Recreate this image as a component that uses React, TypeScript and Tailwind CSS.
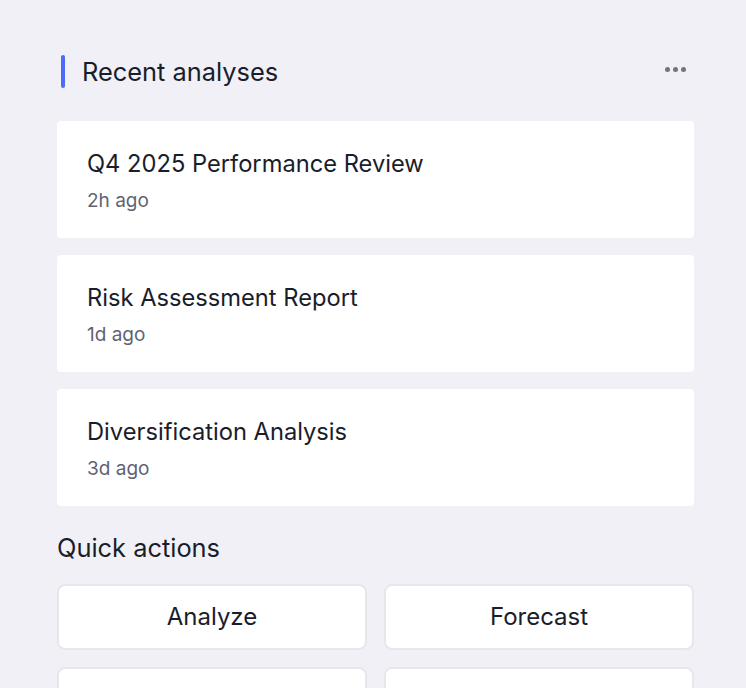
const recent = [
  { title: "Q4 2025 Performance Review", time: "2h ago" },
  { title: "Risk Assessment Report", time: "1d ago" },
  { title: "Diversification Analysis", time: "3d ago" },
];

const actions = ["Analyze", "Forecast", "Compare", "Export"];

export default function App() {
  return (
    <div
      className="min-h-screen bg-[#f0f0f6] pl-[57px] pt-[55px]"
      style={{ fontFamily: "Inter, 'Noto Sans', sans-serif" }}
    >
      <div className="w-[637px]">
        <div className="flex items-center justify-between">
          <div className="flex items-center">
            <div className="ml-[4px] h-[33px] w-[4px] rounded-full bg-[#4a6cf7]" />
            <h2 className="ml-[17px] text-[25.4px] leading-[33px] text-[#1a1d2b]">Recent analyses</h2>
          </div>
          <button className="-mt-[4px] mr-[8px] flex gap-[3px]">
            <span className="h-[5px] w-[5px] rounded-full bg-[#71757f]" />
            <span className="h-[5px] w-[5px] rounded-full bg-[#71757f]" />
            <span className="h-[5px] w-[5px] rounded-full bg-[#71757f]" />
          </button>
        </div>

        <div className="mt-[33px] flex flex-col gap-[17px]">
          {recent.map((item) => (
            <div key={item.title} className="rounded-[4px] bg-white px-[30px] pb-[25px] pt-[28px]">
              <p className="text-[23.7px] leading-[30px] text-[#1a1d2b]">{item.title}</p>
              <p className="mt-[10px] text-[19px] leading-[24px] text-[#5f6371]">{item.time}</p>
            </div>
          ))}
        </div>

        <h3 className="mt-[27px] text-[25.4px] leading-[30px] text-[#1a1d2b]">Quick actions</h3>

        <div className="mt-[21px] grid grid-cols-2 gap-[17px]">
          {actions.map((a) => (
            <button
              key={a}
              className="h-[66px] rounded-[8px] border-2 border-[#e6e6ec] bg-white text-[24px] text-[#1a1d2b]"
            >
              {a}
            </button>
          ))}
        </div>
      </div>
    </div>
  );
}
